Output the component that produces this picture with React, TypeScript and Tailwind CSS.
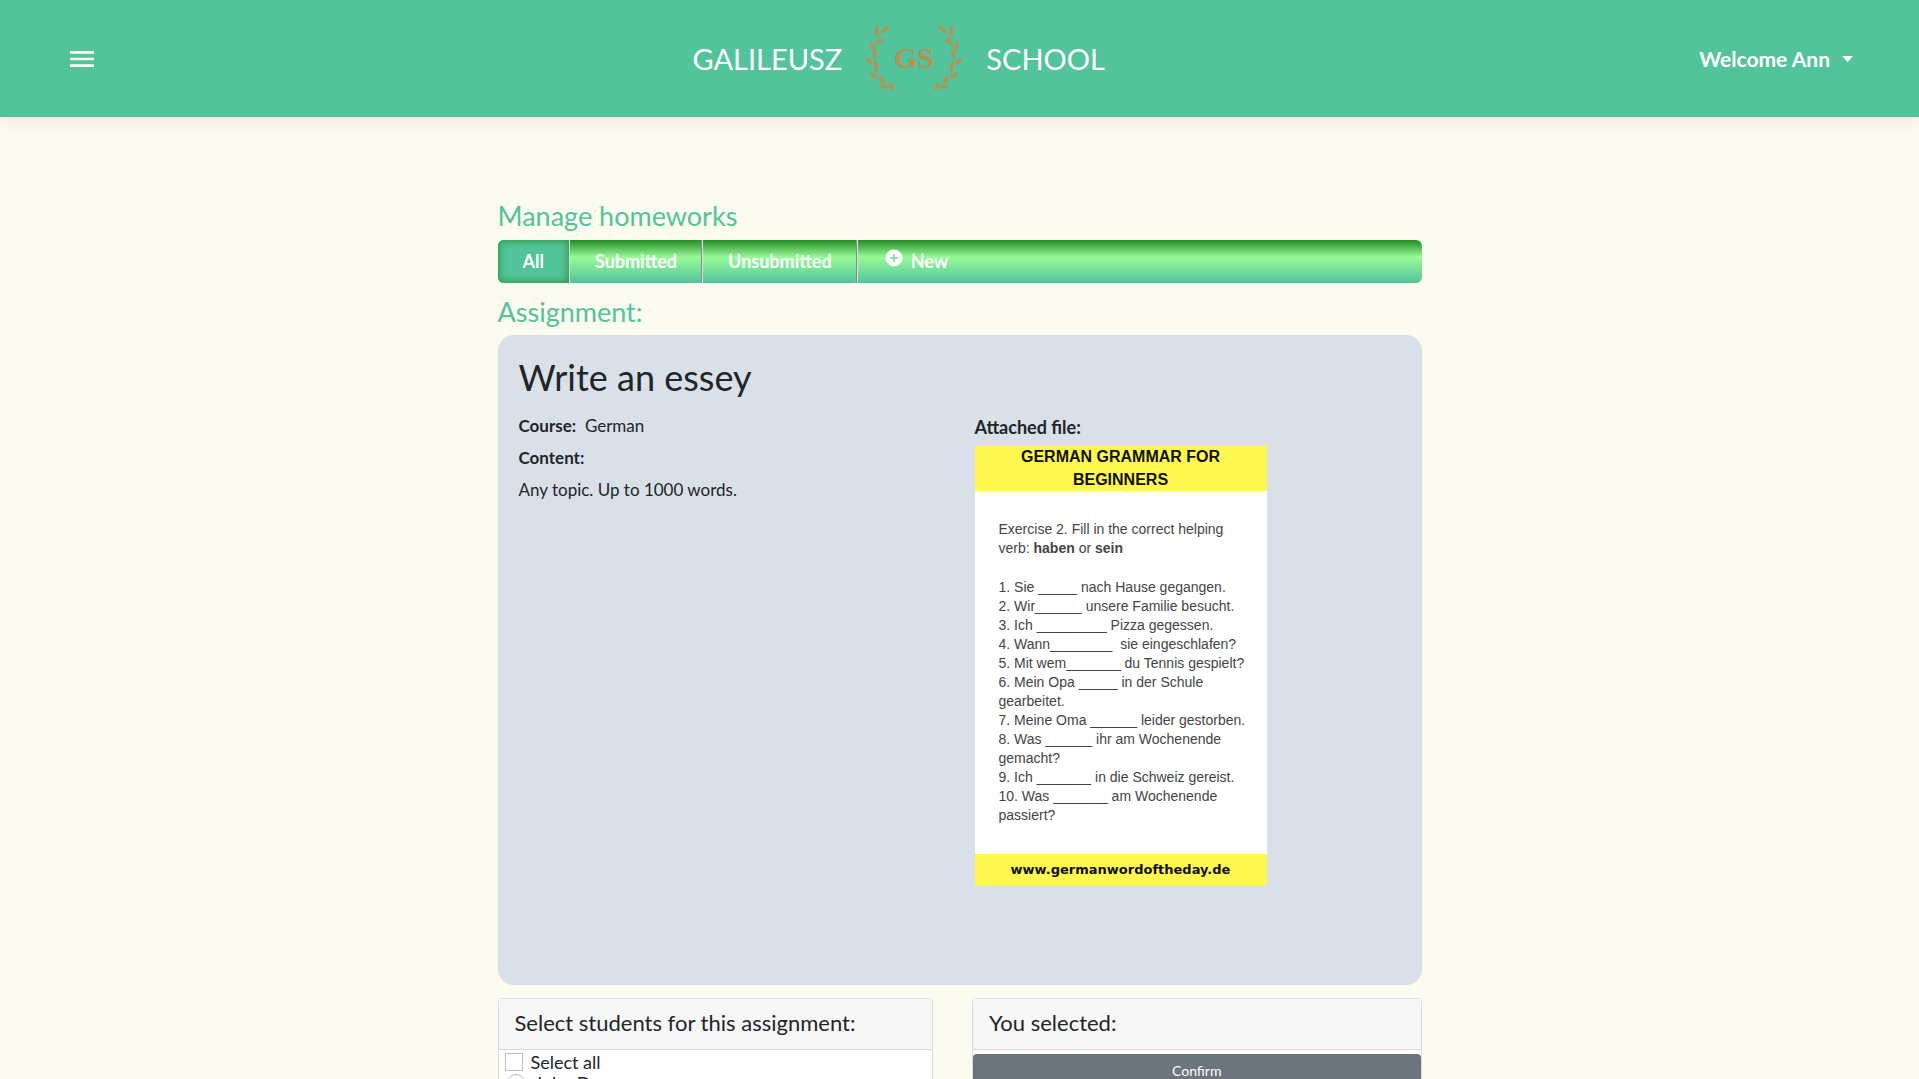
import React from "react";

const leaves = [
  [79, 41, -42, 34], [53, 47, 95, 36], [60, 78, -28, 30], [38, 92, 82, 32], [47, 115, -72, 30],
  [31, 137, 48, 30], [51, 153, 85, 34], [43, 179, 35, 30], [70, 192, 65, 28], [74, 213, 5, 30], [96, 211, 60, 26],
];

function Branch() {
  return (
    <g fill="#b5924f">
      <path d="M88 33 C68 52 58 62 51 88 C42 120 44 150 55 178 C66 200 90 222 116 230" fill="none" stroke="#b5924f" strokeWidth="2.500" />
      {leaves.map(([x, y, r, l], i) => (
        <path
          key={i}
          transform={`translate(${x} ${y}) rotate(${r})`}
          d={`M${-l / 2} 0 C${-l / 4} -7 ${l / 4} -8 ${l / 2} 0 C${l / 4} 8 ${-l / 4} 7 ${-l / 2} 0Z`}
        />
      ))}
    </g>
  );
}

function Logo() {
  return (
    <svg className="h-[74px] w-[104px]" viewBox="9 19 312 222" aria-label="GS">
      <Branch />
      <g transform="translate(330 0) scale(-1 1)"><Branch /></g>
      <text x="165" y="156" textAnchor="middle" fill="#b5924f" fontFamily="Liberation Serif, serif" fontWeight="bold" fontSize="90">GS</text>
    </svg>
  );
}

const tab = "flex items-center border-r border-[#ddd] px-[25px]";
const divider = "shadow-[inset_-1px_0_0_#8a8a8a]";

const exercises = [
  "1. Sie _____ nach Hause gegangen.",
  "2. Wir______ unsere Familie besucht.",
  "3. Ich _________ Pizza gegessen.",
  "4. Wann________\u00a0 sie eingeschlafen?",
  "5. Mit wem_______ du Tennis gespielt?",
  "6. Mein Opa _____ in der Schule",
  "gearbeitet.",
  "7. Meine Oma ______ leider gestorben.",
  "8. Was ______ ihr am Wochenende",
  "gemacht?",
  "9. Ich _______ in die Schweiz gereist.",
  "10. Was _______ am Wochenende",
  "passiert?",
];

function Worksheet() {
  return (
    <figure className="w-[292px] bg-white font-['Liberation_Sans',sans-serif] text-[14px] leading-[19px] text-[#444]">
      <p className="bg-[#fff850] text-center text-[16px] leading-[23px] font-bold text-[#111]">
        GERMAN GRAMMAR FOR<br />BEGINNERS
      </p>
      <div className="px-6 py-[29px] whitespace-nowrap">
        <p>Exercise 2. Fill in the correct helping</p>
        <p className="mb-5">verb: <b>haben</b> or <b>sein</b></p>
        {exercises.map((e) => <p key={e}>{e}</p>)}
      </div>
      <figcaption className="bg-[#fff850] text-center font-['DejaVu_Sans',sans-serif] text-[13px] leading-[31px] font-bold text-[#111]">
        www.germanwordoftheday.de
      </figcaption>
    </figure>
  );
}

const panelTitle = "border-b border-[#d8d8d8] bg-[#f7f7f7] px-4 pb-[3px] text-[22px] leading-[47px]";

export default function App() {
  return (
    <div className="h-screen overflow-hidden bg-[#fcfbef] font-[Lato,sans-serif] text-[16px] text-[#212529]">
      <header className="flex h-[117px] items-center justify-between bg-[#53c39b] px-[66px] text-white shadow-[0_4px_16px_rgba(0,0,0,0.08)]">
        <button type="button" aria-label="Menu">
          <svg className="h-8 w-8" viewBox="0 0 24 24" fill="#fffff0">
            <path d="M3 18h18v-2H3v2zm0-5h18v-2H3v2zm0-7v2h18V6H3z" />
          </svg>
        </button>
        <div className="flex items-center gap-5 text-[29px]">
          <span>GALILEUSZ</span>
          <Logo />
          <span>SCHOOL</span>
        </div>
        <button type="button" className="flex items-center gap-3 text-[21px] font-bold">
          Welcome Ann
          <svg className="h-[6px] w-[11px]" viewBox="0 0 11 6" fill="currentColor"><path d="M0 0h11L5.500 6z" /></svg>
        </button>
      </header>

      <main className="mx-auto mt-[81px] w-full max-w-[924px]">
        <h2 className="text-[27px] leading-[36px] text-[#53c39b]">Manage homeworks</h2>
        <nav className="mt-[6px] flex h-[43px] overflow-hidden rounded-md bg-[linear-gradient(to_bottom,#228b22,#98fb98_40%,#53c39b)] text-[18px] font-bold text-white">
          <a href="#all" className={`${tab} bg-[#53c39b] shadow-[inset_0_0_8px_#228b22]`}>All</a>
          <a href="#submitted" className={`${tab} ${divider}`}>Submitted</a>
          <a href="#unsubmitted" className={`${tab} ${divider}`}>Unsubmitted</a>
          <a href="#new" className="flex items-center gap-2 px-[27px]">
            <svg className="mb-2 h-[18px] w-[18px]" viewBox="0 0 18 18"><circle cx="9" cy="9" r="8.500" fill="#fff" /><path d="M9 5v8M5 9h8" stroke="#75df99" strokeWidth="1.500" /></svg>
            New
          </a>
        </nav>
        <h2 className="mt-[11px] text-[27px] leading-[36px] text-[#53c39b]">Assignment:</h2>

        <section className="mt-[5px] h-[650px] rounded-2xl bg-[#d9e0e8] px-[21px] pt-5">
          <h1 className="text-[36px] leading-[44px]">Write an essey</h1>
          <div className="mt-[11px] grid grid-cols-[456px_1fr]">
            <div className="text-[17px] leading-8">
              <p><b>Course:</b>&nbsp; German</p>
              <p><b>Content:</b></p>
              <p>Any topic. Up to 1000 words.</p>
            </div>
            <div>
              <h3 className="text-[18px] leading-[35px] font-bold">Attached file:</h3>
              <Worksheet />
            </div>
          </div>
        </section>

        <div className="mt-[13px] grid grid-cols-[436fr_450fr] gap-[39px]">
          <section className="h-[200px] rounded border border-[#dcdcdc] bg-white">
            <h3 className={panelTitle}>Select students for this assignment:</h3>
            <div className="flex flex-col gap-[3px] px-[6px] pt-[3px] text-[18px] leading-[18px]">
              <label className="flex items-center gap-2">
                <input type="checkbox" className="h-[18px] w-[18px] appearance-none border border-[#b8bfc6] bg-white" />
                Select all
              </label>
              <label className="flex items-center gap-[10px] px-[2px]">
                <input type="radio" name="student" className="h-[18px] w-[18px] appearance-none rounded-full border border-[#b8bfc6] bg-white" />
                John Doe
              </label>
            </div>
          </section>
          <section className="h-[200px] rounded border border-[#dcdcdc] bg-white">
            <h3 className={panelTitle}>You selected:</h3>
            <button type="button" className="mt-1 h-8 w-full rounded bg-[#6c757d] text-[14px] text-white">Confirm</button>
          </section>
        </div>
      </main>
    </div>
  );
}
